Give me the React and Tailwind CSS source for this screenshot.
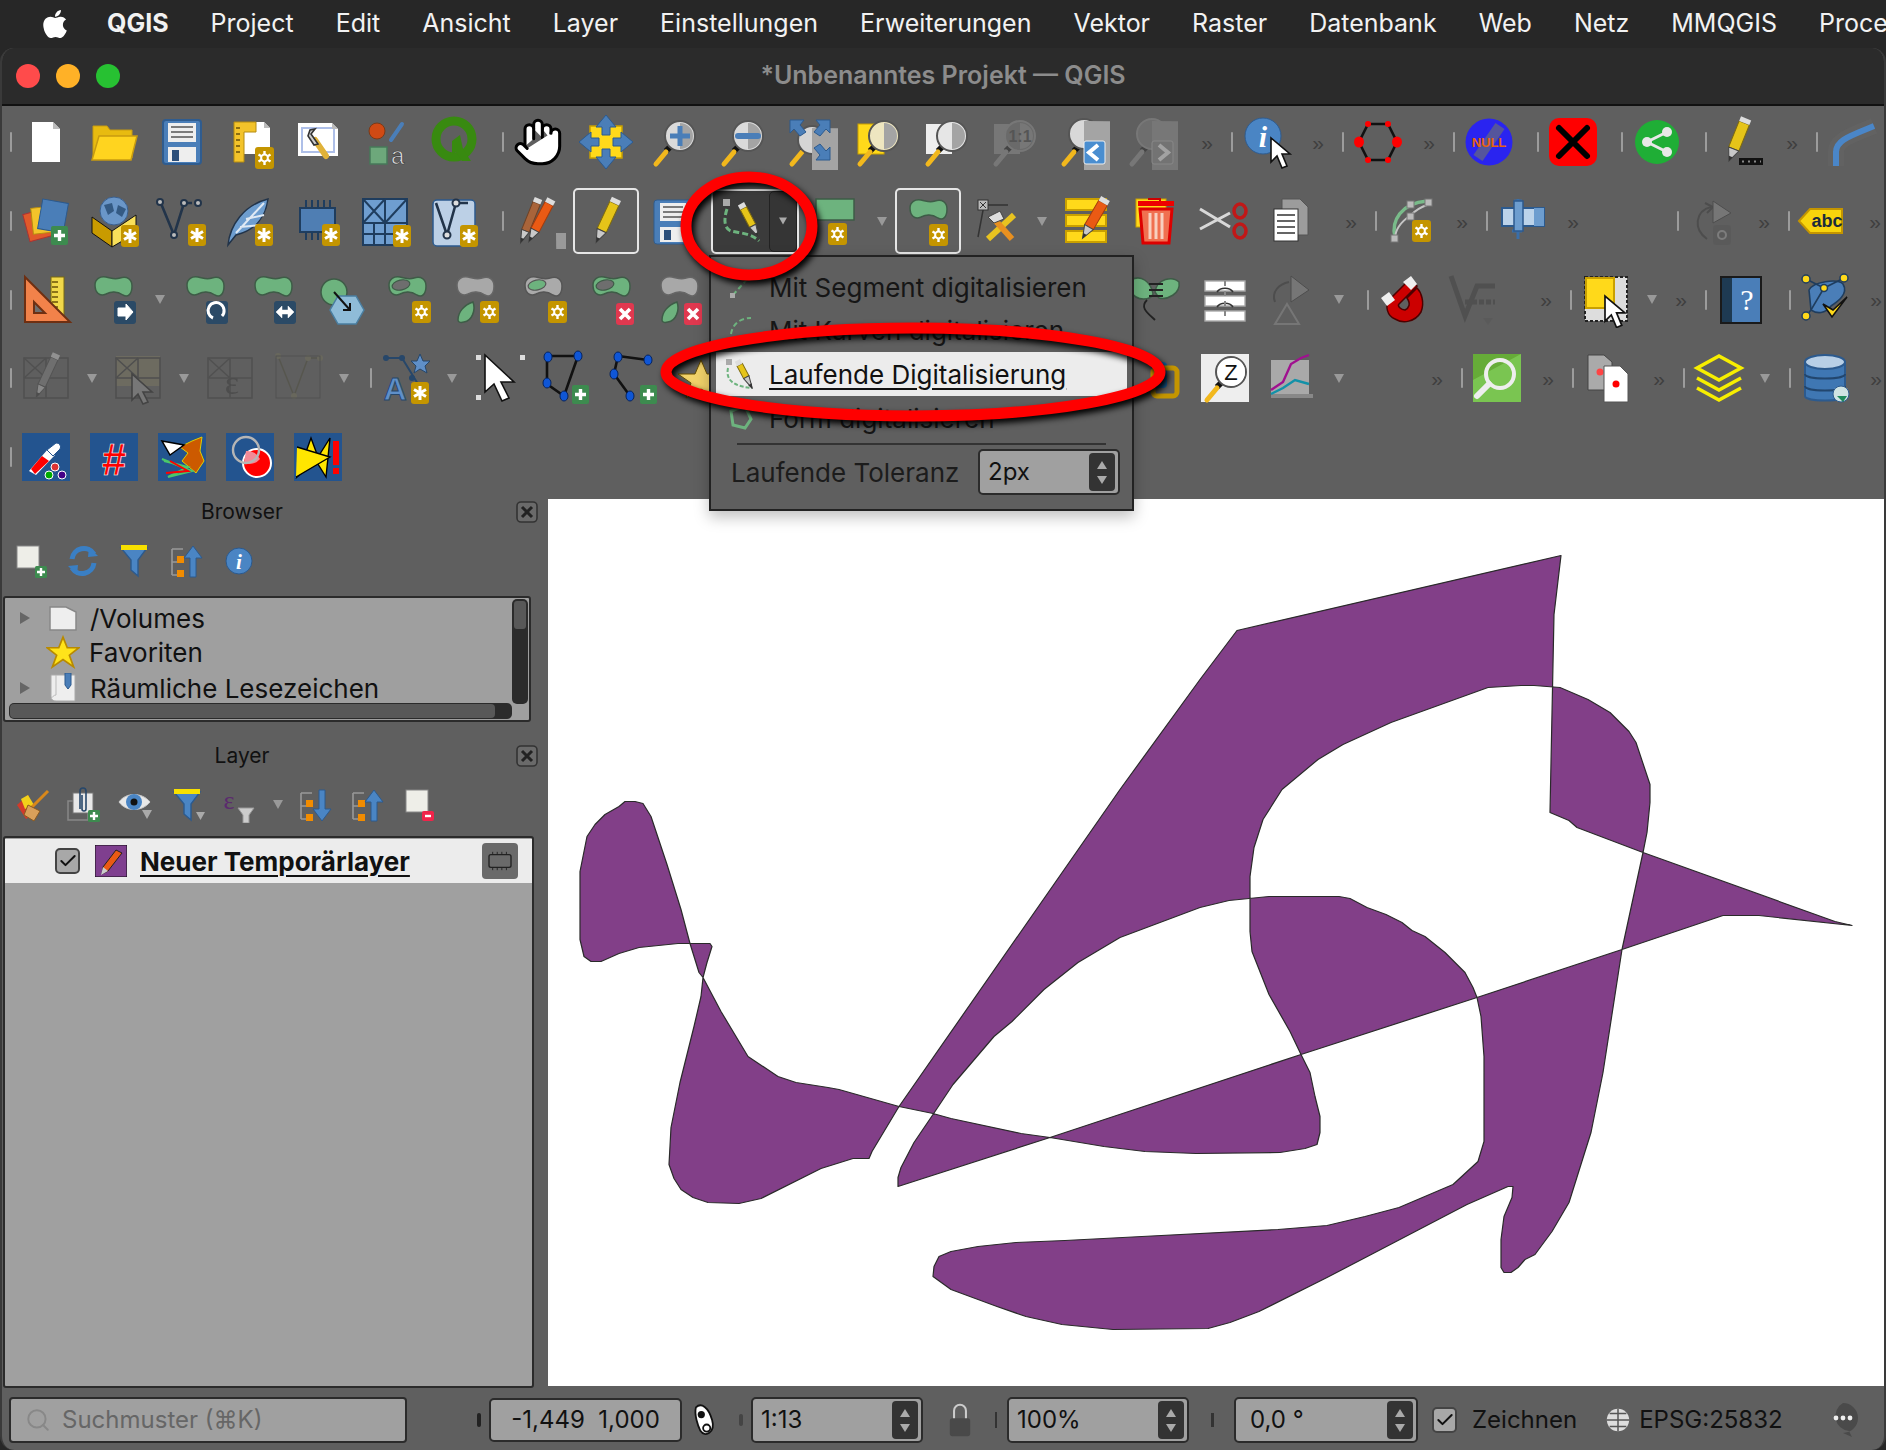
import React from 'react';
import { FaApple } from 'react-icons/fa';
import { Hand, Search, Check } from 'lucide-react';

const menus = ['Project', 'Edit', 'Ansicht', 'Layer', 'Einstellungen', 'Erweiterungen', 'Vektor', 'Raster', 'Datenbank', 'Web', 'Netz', 'MMQGIS', 'Processing'];

// canvas polygon, self-crossing, page coordinates
const shape = 'M1852 926L1759 916L1723 916L1622 950L1477 998L1301 1055L1050 1138L898 1187L898 1178L901 1168L914 1143L933 1115L953 1085L994 1037L1012 1022L1044 990L1078 963L1120 938L1200 908L1229 901L1269 897L1339 897L1350 899L1367 908L1386 915L1402 923L1412 931L1425 937L1445 953L1465 973L1473 988L1477 998L1481 1017L1484 1057L1484 1142L1478 1162L1453 1185L1399 1208L1365 1217L1327 1226L1278 1230L1142 1237L1065 1241L1016 1243L978 1247L951 1252L939 1257L934 1267L933 1277L951 1290L997 1307L1026 1317L1062 1325L1113 1330L1208 1329L1230 1323L1259 1312L1327 1278L1375 1253L1467 1205L1508 1187L1513 1187L1512 1198L1504 1217L1501 1240L1501 1268L1504 1273L1511 1273L1518 1268L1525 1260L1535 1255L1552 1232L1569 1203L1591 1133L1603 1073L1622 950L1643 853L1647 833L1650 803L1650 785L1636 743L1629 732L1610 713L1588 700L1560 688L1534 686L1521 686L1488 688L1391 723L1343 745L1318 760L1282 790L1263 820L1254 848L1250 877L1250 932L1252 952L1269 995L1290 1032L1301 1055L1310 1073L1315 1097L1320 1117L1320 1133L1317 1145L1305 1149L1280 1153L1196 1154L1145 1152L1104 1147L1050 1138L1021 1134L951 1119L933 1114L899 1107L839 1090L828 1088L796 1083L778 1077L748 1057L721 1012L703 978L699 973L690 944L681 910L667 865L651 817L643 804L635 802L625 802L619 807L605 815L595 825L587 837L580 872L580 940L584 957L591 962L601 962L619 954L639 948L678 944L710 944L712 947L707 963L703 978L701 997L694 1027L680 1083L671 1128L669 1165L674 1179L681 1190L693 1198L708 1203L739 1204L761 1199L821 1169L853 1159L869 1159L872 1152L899 1107L1120 790L1200 680L1237 631L1561 556L1554 615L1550 813L1569 821L1577 828L1643 853L1835 922Z';

const blobD = 'M1 9C1 3 6 0 12 1C18 2 20 4 26 2C33 0 38 3 38 10C38 18 34 22 29 19C23 15 18 15 12 18C5 21 1 16 1 9Z';

const Ic = ({ children, dim }) => (
  <svg viewBox="0 0 56 56" className={dim ? 'w-[56px] h-[56px] opacity-40' : 'w-[56px] h-[56px]'}>{children}</svg>
);

const Gear = ({ x = 33, y = 32 }) => (
  <g transform={`translate(${x} ${y})`}>
    <rect width="19" height="22" rx="3" fill="#c49500" />
    <path d="M9.5 4V18M3.5 7.5L15.5 14.5M15.5 7.5L3.5 14.5" stroke="#fff" strokeWidth="2.4" />
    <circle cx="9.5" cy="11" r="3.4" fill="#c49500" stroke="#fff" strokeWidth="2" />
  </g>
);
const Ast = ({ x = 34, y = 32 }) => (
  <g transform={`translate(${x} ${y})`}>
    <rect width="18" height="22" rx="3" fill="#c49500" />
    <path d="M9 4V18M3 7.5L15 14.5M15 7.5L3 14.5" stroke="#fff" strokeWidth="3" />
  </g>
);
const Plus = ({ x = 33, y = 34 }) => (
  <g transform={`translate(${x} ${y})`}>
    <rect width="17" height="19" rx="2" fill="#3d8b4f" />
    <path d="M8.5 4V15M3 9.5H14" stroke="#fff" strokeWidth="3.4" />
  </g>
);
const Rem = ({ x = 34, y = 32 }) => (
  <g transform={`translate(${x} ${y})`}>
    <rect width="18" height="22" rx="3" fill="#e0384f" />
    <path d="M4 6L14 16M14 6L4 16" stroke="#fff" strokeWidth="3.6" />
  </g>
);
const Blob = ({ x = 8, y = 8, fill = '#6db37e', stroke = '#3e5c47', ring }) => (
  <g transform={`translate(${x} ${y})`}>
    <path d={blobD} fill={fill} stroke={stroke} strokeWidth="1.5" />
    {ring && <ellipse cx="13" cy="9" rx="9" ry="5" fill={ring} stroke={stroke} strokeWidth="1.2" transform="rotate(-12 13 9)" />}
  </g>
);
const Leaf = ({ x = 10, y = 34 }) => (
  <path transform={`translate(${x} ${y})`} d="M0 18C0 10 6 3 15 0C18 8 14 19 6 20C2 21 0 20 0 18Z" fill="#6db37e" stroke="#3e5c47" strokeWidth="1.5" />
);
const Lens = ({ cx = 34, cy = 22, r = 15, fill = '#d2d2d2', children, dim }) => (
  <g>
    <path d="M24 33L20 37" stroke={dim ? '#444' : '#111'} strokeWidth="6" />
    <path d="M20 38L10 50" stroke={dim ? '#777' : '#f2b81d'} strokeWidth="5" strokeLinecap="round" />
    <circle cx={cx} cy={cy} r={r} fill={fill} stroke={dim ? '#777' : '#555'} strokeWidth="2" />
    <path d={`M${cx} ${cy - r + 2}A${r - 2} ${r - 2} 0 0 1 ${cx} ${cy + r - 2}Z`} fill={dim ? '#777' : '#a4a4a4'} />
    {children}
  </g>
);
const Cur = ({ x, y, k = 1 }) => (
  <path transform={`translate(${x} ${y}) scale(${k})`} d="M0 0L0 24L6 18L11 30L16 28L11 16L19 16Z" fill="#fff" stroke="#111" strokeWidth="1.6" />
);
const Pen = ({ x, y, body = '#e6c419', edge = '#7d6a10', len = 32, w = 9, a = 28, dim }) => (
  <g transform={`translate(${x} ${y}) rotate(${a})`} opacity={dim ? 0.6 : 1}>
    <rect x={-w / 2} y={-len / 2} width={w} height={len} fill={body} stroke={edge} strokeWidth="1" />
    <rect x={-w / 2} y={-len / 2 - 5} width={w} height="5" fill="#ddd" />
    <path d={`M${-w / 2} ${len / 2}L${w / 2} ${len / 2}L0 ${len / 2 + 13}Z`} fill="#c9c9c9" stroke="#444" strokeWidth="1" />
    <path d={`M-2 ${len / 2 + 8}L2 ${len / 2 + 8}L0 ${len / 2 + 13}Z`} fill="#333" />
  </g>
);
const Tri = ({ x, y }) => <path d={`M${x - 5} ${y - 4}H${x + 5}L${x} ${y + 5}Z`} fill="#999" />;
const Arrow4 = ({ fill = '#4a7eb8', stroke = '#2c5a8e' }) => (
  <g fill={fill} stroke={stroke} strokeWidth="1">
    {[0, 90, 180, 270].map((r) => (
      <path key={r} transform={`rotate(${r} 28 28)`} d="M28 1L38 13H32V21H24V13H18Z" />
    ))}
  </g>
);
const MeshBox = () => (
  <g fill="none" stroke="#3c3c3c" strokeWidth="1.6">
    <rect x="6" y="8" width="44" height="40" />
    <path d="M6 8L28 28M28 8L6 28M28 8V48M6 28H50" />
  </g>
);
const Nodes = ({ pts, r = 4 }) => pts.map(([x, y], i) => <ellipse key={i} cx={x} cy={y} rx={r} ry={r + 1} fill="#0f56d6" stroke="#06225c" />);

const Page = () => <Ic><path d="M14 8H35L42 15V48H14Z" fill="#fff" /><path d="M35 8V15H42Z" fill="#bcbcbc" /></Ic>;
const Folder = () => <Ic><path d="M7 12H21L24 16H46V44H7Z" fill="#e8bb10" stroke="#c79b10" /><path d="M13 22H51L45 46H6Z" fill="#ffd41f" stroke="#c79b10" strokeWidth="1.5" /></Ic>;
const Floppy = () => (
  <Ic>
    <rect x="9" y="6" width="38" height="44" rx="3" fill="#4a7eb8" stroke="#2f5c8f" strokeWidth="2" />
    <rect x="14" y="9" width="28" height="19" fill="#eee" />
    <path d="M17 13H39M17 18H39M17 23H39" stroke="#555" strokeWidth="1.6" />
    <rect x="14" y="33" width="28" height="15" fill="#eee" />
    <rect x="18" y="36" width="7" height="11" fill="#2c4f7a" />
  </Ic>
);
const Layouts = () => (
  <Ic>
    <path d="M18 8H42L48 14V40H18Z" fill="#fff" /><path d="M42 8V14H48Z" fill="#bbb" />
    <path d="M12 8H34V18H22V48H12Z" fill="#f3c32a" stroke="#b58c10" />
    <path d="M14 14H18M14 20H18M14 26H18M14 32H18M14 38H18" stroke="#6b5208" strokeWidth="1.5" />
    <Gear x="33" y="33" />
  </Ic>
);
const Manager = () => (
  <Ic>
    <path d="M8 9H42L48 15V42H8Z" fill="#fff" /><rect x="12" y="14" width="32" height="24" fill="none" stroke="#aebfe8" strokeWidth="2" />
    <path d="M42 9V15H48Z" fill="#bbb" />
    <path d="M36 42L25 26" stroke="#e0b23a" strokeWidth="6" strokeLinecap="round" />
    <path d="M28 30L21 20L25 15L20 16L18 22L24 31Z" fill="#ccc" stroke="#333" strokeWidth="1.6" />
  </Ic>
);
const Style = () => (
  <Ic>
    <circle cx="19" cy="17" r="8" fill="#d04a14" stroke="#7a3a18" />
    <path d="M33 26L44 10" stroke="#4a7eb8" strokeWidth="4" strokeLinecap="round" />
    <rect x="12" y="33" width="17" height="17" fill="#6da87b" stroke="#47795a" strokeWidth="1.5" />
    <text x="33" y="50" fontSize="24" fontFamily="Liberation Sans, sans-serif" fill="#ddd" stroke="#333" strokeWidth="0.6">a</text>
  </Ic>
);
const QLogo = () => (
  <Ic>
    <circle cx="28" cy="25" r="18" fill="none" stroke="#388a10" strokeWidth="9" />
    <path d="M26 27L34 21L37 35L45 47H36L30 38L26 41Z" fill="#388a10" />
  </Ic>
);
const MoveIcon = () => <Ic><rect x="12" y="12" width="32" height="32" fill="#ffd91a" stroke="#c9a000" strokeWidth="1.5" /><Arrow4 /></Ic>;
const ZoomIn = () => <Ic><Lens fill="#dadada"><path d="M24 22H44M34 12V32" stroke="#4a7eb8" strokeWidth="5" /></Lens></Ic>;
const ZoomOut = () => <Ic><Lens fill="#dadada"><path d="M24 22H44" stroke="#4a7eb8" strokeWidth="6" strokeLinecap="round" /></Lens></Ic>;
const ZoomFull = () => (
  <Ic>
    <Lens fill="#d5d5d5" cx="30" cy="26" r="14" />
    <g fill="#4a7eb8" stroke="#2c5a8e">
      <path d="M8 6H22L18 11L24 18L18 22L12 15L8 19Z" /><path d="M48 6H34L38 11L32 18L38 22L44 15L48 19Z" /><path d="M48 46H34L38 41L32 34L38 30L44 37L48 33Z" />
    </g>
  </Ic>
);
const ZoomSel = () => <Ic><rect x="8" y="10" width="26" height="30" fill="#ffd91a" stroke="#c9a000" /><Lens fill="#eee6c0" /></Ic>;
const ZoomLayer = () => <Ic><rect x="8" y="10" width="26" height="30" fill="#eee" /><Lens fill="#e6e6e6" /></Ic>;
const Zoom11 = () => (
  <Ic>
    <rect x="8" y="10" width="26" height="30" fill="#777" />
    <Lens fill="#6a6a6a" dim><text x="34" y="28" textAnchor="middle" fontSize="16" fontWeight="700" fontFamily="Liberation Sans, sans-serif" fill="#555">1:1</text></Lens>
  </Ic>
);
const ZoomLast = () => (
  <Ic>
    <Lens fill="#d8d8d8" cx="30" cy="20" />
    <rect x="30" y="27" width="21" height="23" rx="2" fill="#4a8ed0" stroke="#eee" />
    <path d="M44 31L35 38.5L44 46" fill="none" stroke="#fff" strokeWidth="4" />
  </Ic>
);
const ZoomNext = () => (
  <Ic>
    <Lens fill="#6e6e6e" cx="30" cy="20" dim />
    <rect x="30" y="27" width="21" height="23" rx="2" fill="#737373" stroke="#888" />
    <path d="M37 31L46 38.5L37 46" fill="none" stroke="#a2a2a2" strokeWidth="4" />
  </Ic>
);
const Identify = () => (
  <Ic>
    <circle cx="24" cy="22" r="18" fill="#4a85c4" stroke="#2f5c8f" />
    <text x="24" y="33" textAnchor="middle" fontSize="30" fontWeight="700" fontStyle="italic" fontFamily="Liberation Serif, serif" fill="#fff">i</text>
    <Cur x="32" y="24" />
  </Ic>
);
const Hexa = () => (
  <Ic>
    <path d="M18 10H38L47 28L38 46H18L9 28Z" fill="none" stroke="#111" strokeWidth="2.6" />
    {[[18, 10], [38, 10], [38, 46], [18, 46]].map(([x, y]) => <circle key={x + '' + y} cx={x} cy={y} r="3" fill="#f00" />)}
    <ellipse cx="9" cy="28" rx="5" ry="5.5" fill="#f00" /><ellipse cx="47" cy="28" rx="5" ry="5.5" fill="#f00" />
  </Ic>
);
const NullIcon = () => (
  <Ic>
    <circle cx="28" cy="28" r="23.5" fill="#2a24f0" />
    <path d="M39 12L17 44" stroke="#55559c" strokeWidth="11" />
    <text x="28" y="33" textAnchor="middle" fontSize="13" fontWeight="700" fontFamily="Liberation Sans, sans-serif" fill="#e8620e">NULL</text>
  </Ic>
);
const RedX = () => <Ic><rect x="4" y="4" width="48" height="48" rx="10" fill="#f00" /><path d="M14 14L42 42M42 14L14 42" stroke="#000" strokeWidth="6" strokeLinecap="round" /></Ic>;
const ShareIcon = () => (
  <Ic>
    <circle cx="28" cy="28" r="22" fill="#1fae36" />
    <path d="M38 18L18 28L38 38" fill="none" stroke="#e8e8e8" strokeWidth="3" />
    <circle cx="38" cy="18" r="5" fill="#e8e8e8" /><circle cx="18" cy="28" r="5" fill="#e8e8e8" /><circle cx="38" cy="38" r="5" fill="#e8e8e8" />
  </Ic>
);
const PenDots = () => (
  <Ic>
    <Pen x="26" y="22" len="28" w="11" a="22" />
    <rect x="26" y="44" width="24" height="7" fill="#111" />
    <path d="M29 47.5H48" stroke="#888" strokeWidth="2" strokeDasharray="2 4" />
  </Ic>
);
const Pipe = () => (
  <Ic>
    <path d="M12 52V38C12 26 26 22 50 12" fill="none" stroke="#666" strokeWidth="16" opacity="0.5" />
    <path d="M12 52V38C12 26 26 22 50 12" fill="none" stroke="#4a86c8" strokeWidth="6" />
  </Ic>
);

const AddLayer = () => (
  <Ic>
    <rect x="8" y="18" width="24" height="28" fill="#e0592a" stroke="#a33" transform="rotate(-15 20 32)" />
    <rect x="14" y="14" width="24" height="26" fill="#f3c32a" stroke="#b58c10" transform="rotate(-6 26 27)" />
    <rect x="22" y="8" width="26" height="30" fill="#4a7eb8" stroke="#2c5a8e" transform="rotate(10 35 23)" />
    <Plus x="33" y="33" />
  </Ic>
);
const GeoBox = () => (
  <Ic>
    <circle cx="28" cy="18" r="14" fill="#6a96c8" stroke="#3a5f8e" /><path d="M18 12L26 10L28 18L22 22ZM32 12L40 16L36 24L30 20Z" fill="#345a84" />
    <path d="M6 24L26 38V54L6 40Z" fill="#c99b00" stroke="#111" /><path d="M26 38L50 22V40L26 54Z" fill="#f8e05a" stroke="#111" />
    <Ast x="35" y="32" />
  </Ic>
);
const VIcon = () => (
  <Ic>
    <path d="M6 8L20 42L30 10L38 10" fill="none" stroke="#22344a" strokeWidth="2.6" />
    <g fill="#bbb" stroke="#22344a" strokeWidth="2"><circle cx="6" cy="9" r="3" /><circle cx="20" cy="42" r="3" /><circle cx="30" cy="10" r="3" /><circle cx="44" cy="10" r="3" /></g>
    <Ast x="34" y="31" />
  </Ic>
);
const Feather = () => (
  <Ic>
    <path d="M6 52C8 32 22 12 46 6C44 20 38 36 14 42Z" fill="#6d9dcf" stroke="#22344a" strokeWidth="1.5" />
    <path d="M14 40L42 10M18 34L38 32M24 26L42 22" stroke="#dfe9f4" strokeWidth="2" />
    <Ast x="33" y="31" />
  </Ic>
);
const Chip = () => (
  <Ic>
    <rect x="10" y="15" width="35" height="24" fill="#4f7eb3" stroke="#1f3d5e" strokeWidth="2" />
    <path d="M16 7V15M22 7V15M28 7V15M34 7V15M40 7V15M16 39V47M22 39V47M28 39V47" stroke="#1f3d5e" strokeWidth="2" />
    <Ast x="32" y="31" />
  </Ic>
);
const MeshIcon = () => (
  <Ic>
    <rect x="5" y="6" width="44" height="46" fill="#6f9ed0" stroke="#1f3d5e" strokeWidth="2" />
    <path d="M5 30H49M27 6V52M5 6L27 30M27 6L5 30M27 30L49 6M5 41H49M16 30V52" stroke="#1f3d5e" strokeWidth="2" fill="none" />
    <Ast x="35" y="32" />
  </Ic>
);
const VTile = () => (
  <Ic>
    <rect x="7" y="7" width="42" height="46" rx="4" fill="#bcd0e6" stroke="#2c5a8e" strokeWidth="1.5" />
    <path d="M10 10L21 42L30 10L42 10" fill="none" stroke="#22344a" strokeWidth="2.6" />
    <g fill="#ddd" stroke="#22344a" strokeWidth="2"><circle cx="21" cy="42" r="3.5" /><circle cx="30" cy="10" r="3.5" /></g>
    <Ast x="34" y="32" />
  </Ic>
);
const Pencils = () => (
  <Ic>
    <Pen x="21" y="24" body="#a9643a" edge="#6d4226" len="30" w="8" a="22" />
    <Pen x="32" y="24" body="#ea5a14" edge="#a33c0d" len="30" w="9" a="28" />
    <Tri x="51" y="44" />
  </Ic>
);
const EditPen = () => <Ic><Pen x="30" y="24" len="30" w="10" a="25" /></Ic>;
const SaveEdits = () => (
  <Ic>
    <rect x="8" y="7" width="38" height="44" rx="3" fill="#4a7eb8" stroke="#2f5c8f" />
    <rect x="14" y="10" width="26" height="18" fill="#eee" /><path d="M17 14H37M17 19H37M17 24H37" stroke="#555" strokeWidth="1.6" />
    <rect x="14" y="34" width="26" height="15" fill="#eee" /><rect x="18" y="37" width="7" height="10" fill="#2c4f7a" />
  </Ic>
);
const AddRect = () => (
  <Ic>
    <rect x="8" y="6" width="38" height="21" fill="#6db37e" stroke="#3e5c47" strokeWidth="1.5" />
    <Gear x="20" y="30" />
  </Ic>
);
const BlobGear = () => <Ic><Blob x="9" y="6" /><Gear x="29" y="31" /></Ic>;
const VertexTool = () => (
  <Ic>
    <path d="M10 44L16 12H40" fill="none" stroke="#333" strokeWidth="1.5" />
    <rect x="10" y="7" width="10" height="10" fill="#bbb" stroke="#333" /><path d="M12 9L18 15M18 9L12 15" stroke="#333" />
    <path d="M20 46L46 22" stroke="#e8c320" strokeWidth="6" />
    <path d="M26 26L44 46" stroke="#e89020" strokeWidth="6" />
    <path d="M20 24L32 18L36 26L26 30Z" fill="#ddd" stroke="#444" />
  </Ic>
);
const MultiEdit = () => (
  <Ic>
    <g fill="#ffd91a" stroke="#c9a000" strokeWidth="2"><rect x="6" y="6" width="40" height="11" /><rect x="6" y="22" width="40" height="11" /><rect x="6" y="38" width="40" height="11" /></g>
    <Pen x="36" y="22" body="#ea5a14" edge="#a33c0d" len="28" w="10" a="30" />
  </Ic>
);
const Trash = () => (
  <Ic>
    <rect x="8" y="6" width="30" height="28" fill="#ffd91a" stroke="#c9a000" />
    <path d="M20 6H32V10" fill="none" stroke="#c00" strokeWidth="2" />
    <rect x="10" y="8" width="36" height="5" fill="#e00" />
    <path d="M12 16H44L41 50H15Z" fill="#f07050" stroke="#d00" strokeWidth="3" />
    <path d="M22 20V46M28 20V46M34 20V46" stroke="#f8d0c0" strokeWidth="3" />
  </Ic>
);
const Scissors = () => (
  <Ic>
    <path d="M4 16L34 34M4 36L34 20" stroke="#d8d8d8" strokeWidth="3" />
    <g fill="none" stroke="#c01818" strokeWidth="3.5"><ellipse cx="44" cy="18" rx="6" ry="7" /><ellipse cx="44" cy="38" rx="6" ry="7" /></g>
  </Ic>
);
const Copy = () => (
  <Ic>
    <path d="M18 6H36L44 14V42H18Z" fill="#9c9c9c" stroke="#555" />
    <rect x="10" y="16" width="24" height="32" fill="#fff" stroke="#333" />
    <path d="M13 22H31M13 28H31M13 34H31M13 40H31" stroke="#333" strokeWidth="1.6" />
  </Ic>
);
const CurveIcon = () => (
  <Ic>
    <path d="M12 44C8 28 18 10 44 8" fill="none" stroke="#79bb8a" strokeWidth="3.5" />
    <path d="M12 46C12 34 22 26 28 22C34 16 38 14 44 12" fill="none" stroke="#c4c4c4" strokeWidth="2" />
    <g fill="#bbb" stroke="#777"><rect x="8" y="42" width="7" height="7" /><rect x="24" y="8" width="7" height="7" /><rect x="24" y="20" width="7" height="7" /><rect x="42" y="6" width="7" height="7" /></g>
    <Gear x="29" y="27" />
  </Ic>
);
const AlignIcon = () => (
  <Ic>
    <rect x="8" y="15" width="42" height="18" fill="#bcd3ea" stroke="#2c5a8e" strokeWidth="2" />
    <rect x="40" y="15" width="10" height="18" fill="#6d9dcf" />
    <path d="M24 6V46M20 8H28M18 38H28" stroke="#3a6ea8" strokeWidth="3" fill="none" />
    <rect x="20" y="8" width="9" height="30" fill="#6d9dcf" stroke="#2c5a8e" strokeWidth="1.5" />
  </Ic>
);
const RedoDim = () => (
  <Ic dim>
    <path d="M22 46C8 36 10 18 26 14" fill="none" stroke="#333" strokeWidth="2" /><path d="M20 10L28 14L22 20" fill="none" stroke="#333" strokeWidth="2" />
    <path d="M28 8L46 20L28 30Z" fill="#999" stroke="#333" />
    <rect x="28" y="32" width="18" height="20" rx="3" fill="#555" /><circle cx="37" cy="42" r="4" fill="none" stroke="#aaa" strokeWidth="2" />
  </Ic>
);
const Abc = () => (
  <Ic>
    <path d="M3 28L14 16H46V40H14Z" fill="#f8d40c" stroke="#c49500" strokeWidth="2" />
    <text x="31" y="34" textAnchor="middle" fontSize="18" fontWeight="700" fontFamily="Liberation Sans, sans-serif" fill="#1b2b3c">abc</text>
  </Ic>
);

const Ruler = () => (
  <Ic>
    <rect x="33" y="5" width="13" height="44" fill="#f1d84a" stroke="#7a6a10" />
    <path d="M34 10H40M34 15H40M34 20H40M34 25H40M34 30H40M34 35H40" stroke="#6b5208" strokeWidth="1.5" />
    <path d="M7 5L52 50H7Z" fill="#f2824a" stroke="#6e2f12" strokeWidth="2" />
    <path d="M16 30L27 41H16Z" fill="#6e6e6e" stroke="#6e2f12" strokeWidth="2" />
  </Ic>
);
const DarkTag = ({ children }) => (
  <g><rect x="28" y="29" width="22" height="23" rx="3" fill="#2b4a66" /><g stroke="#fff" fill="#fff">{children}</g></g>
);
const Merge = () => <Ic><Blob x="8" y="4" /><DarkTag><path d="M32 36H40V32L47 40L40 48V44H32Z" strokeWidth="1" /></DarkTag></Ic>;
const Rotate = () => <Ic><Blob x="8" y="4" /><DarkTag><path d="M35 46A8 8 0 1 1 44 44" fill="none" strokeWidth="3" /></DarkTag></Ic>;
const Swap = () => <Ic><Blob x="8" y="4" /><DarkTag><path d="M30 40L36 34V38H42V34L48 40L42 46V42H36V46Z" strokeWidth="0.5" /></DarkTag></Ic>;
const Circ = () => (
  <Ic>
    <circle cx="20" cy="20" r="13" fill="#6db37e" stroke="#3e5c47" strokeWidth="1.5" />
    <path d="M24 24H42L50 38L42 52H24L16 38Z" fill="#8fbcd8" stroke="#4a7ea0" strokeWidth="1.5" />
    <path d="M20 20L36 38" stroke="#111" strokeWidth="2" /><path d="M36 31V38H29" fill="none" stroke="#111" strokeWidth="2" />
  </Ic>
);
const RingGear = () => <Ic><Blob x="6" y="4" ring="#6e6e6e" /><Gear x="30" y="29" /></Ic>;
const GrayLeaf = ({ bad }) => (
  <Ic>
    <Blob x="6" y="4" fill="#a8a8a8" stroke="#666" />
    <Leaf x="8" y="30" />
    {bad ? <Rem x="30" y="31" /> : <Gear x="30" y="29" />}
  </Ic>
);
const GrayRing = () => <Ic><Blob x="6" y="4" fill="#aaa" stroke="#555" ring="#6db37e" /><Gear x="30" y="29" /></Ic>;
const RingRem = () => <Ic><Blob x="6" y="4" ring="#6e6e6e" /><Rem x="30" y="31" /></Ic>;
const Bridge = () => (
  <Ic>
    <path d="M2 8C12 2 22 10 24 22C22 28 8 30 2 20Z" fill="#6db37e" stroke="#3e5c47" strokeWidth="1.5" />
    <path d="M26 20C28 6 44 4 50 10C52 22 38 28 30 26Z" fill="#6db37e" stroke="#3e5c47" strokeWidth="1.5" />
    <path d="M20 12H34M20 18H34M20 24H34M18 28C10 36 20 42 26 48" fill="none" stroke="#222" strokeWidth="1.8" />
  </Ic>
);
const Spread = () => (
  <Ic>
    <g fill="#fff" stroke="#aaa" strokeWidth="1.4"><rect x="8" y="9" width="40" height="10" /><rect x="8" y="24" width="40" height="10" /><rect x="8" y="39" width="40" height="10" /></g>
    <path d="M20 20A9 7 0 0 1 36 20M20 35A9 7 0 0 1 36 35" fill="none" stroke="#333" strokeWidth="1.6" />
    <path d="M28 9V49" stroke="#888" strokeWidth="2" strokeDasharray="5 5" />
  </Ic>
);
const OffsetDim = () => (
  <Ic dim>
    <path d="M10 30C6 20 14 12 24 10" fill="none" stroke="#333" strokeWidth="2" />
    <path d="M26 4L44 18L26 30Z" fill="#999" stroke="#333" />
    <path d="M22 32L34 52H10Z" fill="none" stroke="#999" strokeWidth="2" />
  </Ic>
);
const Magnet = () => (
  <Ic>
    <path d="M34 8L14 28C10 34 12 44 20 47C28 52 40 50 46 40C50 30 46 20 42 16L32 26C36 32 34 36 30 38C26 38 22 34 24 32L42 14Z" fill="#cc0000" stroke="#4d0000" strokeWidth="1.5" />
    <path d="M28 10L36 4L42 12L36 18ZM6 26L14 20L20 28L12 34Z" fill="#eee" />
  </Ic>
);
const SnapDim = () => (
  <Ic dim>
    <path d="M8 4L22 44L34 14H52" fill="none" stroke="#3a3a3a" strokeWidth="5" />
    <path d="M22 30H52" stroke="#3a3a3a" strokeWidth="5" strokeDasharray="5 2" />
    <path d="M40 46H50L45 53Z" fill="#555" />
  </Ic>
);
const Select = () => (
  <Ic>
    <rect x="7" y="5" width="42" height="44" fill="#ddd" stroke="#222" strokeDasharray="3 2" strokeWidth="2" />
    <rect x="8" y="6" width="28" height="30" fill="#ffd91a" stroke="#c9a000" strokeWidth="2" />
    <Cur x="27" y="24" k="1.05" />
  </Ic>
);
const Help = () => (
  <Ic>
    <rect x="8" y="5" width="40" height="46" fill="#4a7eb8" stroke="#1a1a1a" strokeWidth="2" />
    <rect x="9" y="6" width="10" height="44" fill="#1e3a52" />
    <text x="34" y="38" textAnchor="middle" fontSize="30" fontFamily="Liberation Serif, serif" fill="#fff">?</text>
  </Ic>
);
const NodeCheck = () => (
  <Ic>
    <path d="M12 18C16 10 40 6 46 12C52 22 40 30 34 34C28 42 20 42 14 38Z" fill="#4a7eb8" stroke="#1f3d5e" strokeWidth="1.6" />
    <path d="M9 7L27 16L47 6M27 16L14 38L9 44" fill="none" stroke="#1f3d5e" strokeWidth="1.6" />
    <g fill="#ffd91a" stroke="#1f3d5e" strokeWidth="1.5"><circle cx="9" cy="7" r="4" /><circle cx="27" cy="16" r="3.5" /><circle cx="47" cy="6" r="4" /><circle cx="9" cy="44" r="4" /></g>
    <path d="M26 32L35 45L50 25L36 38Z" fill="#ffd91a" stroke="#111" strokeWidth="1.6" />
  </Ic>
);

const PenMesh = () => <Ic dim><MeshBox /><Pen x="30" y="22" body="#888" edge="#444" len="30" w="8" a="25" /></Ic>;
const MeshCur = () => (
  <Ic>
    <g opacity="0.45"><rect x="6" y="6" width="44" height="30" fill="#7f7a62" /><MeshBox /></g>
    <path d="M22 24L22 50L28 44L33 54L38 52L33 42L42 42Z" fill="#777" stroke="#444" strokeWidth="1.6" />
  </Ic>
);
const MeshE = () => (
  <Ic dim>
    <MeshBox />
    <text x="30" y="44" textAnchor="middle" fontSize="34" fontFamily="Liberation Serif, serif" fill="#333">ε</text>
  </Ic>
);
const VDim = () => (
  <Ic dim>
    <path d="M8 6L24 46L38 8H50" fill="none" stroke="#4b4a36" strokeWidth="1.5" />
    <g fill="#77755a"><circle cx="8" cy="6" r="3" /><circle cx="24" cy="46" r="3" /><circle cx="38" cy="8" r="3" /><circle cx="50" cy="8" r="3" /></g>
    <rect x="6" y="6" width="44" height="42" fill="none" stroke="#3c3c3c" />
  </Ic>
);
const LabelIc = () => (
  <Ic>
    <path d="M8 8H24L40 34" fill="none" stroke="#27476a" strokeWidth="2" />
    <circle cx="8" cy="8" r="3" fill="#27476a" /><circle cx="24" cy="8" r="3" fill="#27476a" /><circle cx="34" cy="28" r="3" fill="#27476a" />
    <path d="M42 4L45 11H52L47 16L49 23L42 19L36 23L38 16L33 11H39Z" fill="#5f8fc8" stroke="#27476a" />
    <text x="17" y="50" textAnchor="middle" fontSize="32" fontWeight="700" fontFamily="Liberation Sans, sans-serif" fill="#5f8fc8" stroke="#27476a" strokeWidth="1">A</text>
    <Ast x="33" y="32" />
  </Ic>
);
const SelectArrow = () => (
  <Ic>
    <g fill="#ddd"><rect x="6" y="5" width="5" height="5" /><rect x="50" y="5" width="5" height="5" /><rect x="6" y="45" width="5" height="5" /></g>
    <path d="M15 5V42L24 34L32 51L39 48L31 32L44 32Z" fill="#fff" stroke="#111" strokeWidth="1.6" />
  </Ic>
);
const Poly = () => (
  <Ic>
    <path d="M9 6L40 6L26 46L9 34Z" fill="none" stroke="#111" strokeWidth="2.6" />
    <Nodes pts={[[10, 7], [40, 6], [9, 33], [26, 46]]} />
    <Plus x="34" y="35" />
  </Ic>
);
const LineAdd = () => (
  <Ic>
    <path d="M12 6L42 10M12 6L8 24L24 46" fill="none" stroke="#111" strokeWidth="2.6" />
    <Nodes pts={[[12, 7], [42, 10], [8, 24], [24, 46]]} />
    <Plus x="34" y="35" />
  </Ic>
);
const StarIc = () => <Ic><path d="M27 10L33 24L50 24L37 33L42 48L27 39L12 48L17 33L4 24L21 24Z" fill="#f2d36a" stroke="#6a5000" /></Ic>;
const BlueYellow = () => <Ic><rect x="22" y="12" width="16" height="26" rx="4" fill="#14619e" /><rect x="24" y="18" width="24" height="28" rx="4" fill="none" stroke="#c49500" strokeWidth="5" /></Ic>;
const ZoomZ = () => (
  <Ic>
    <rect x="4" y="4" width="48" height="48" fill="#eee" />
    <Lens fill="#fff"><path d="M34 8A14 14 0 0 1 34 36Z" fill="#fff" /><text x="34" y="30" textAnchor="middle" fontSize="22" fontFamily="Liberation Sans, sans-serif" fill="#111">Z</text></Lens>
  </Ic>
);
const Chart = () => (
  <Ic>
    <rect x="6" y="10" width="38" height="34" fill="#a9a9a9" />
    <path d="M6 46H48" stroke="#888" strokeWidth="4" />
    <path d="M6 40L18 32L26 14L36 8L44 5" fill="none" stroke="#a0108f" strokeWidth="2.4" />
    <path d="M6 44L18 38L30 30L44 34" fill="none" stroke="#1291a8" strokeWidth="2.4" />
  </Ic>
);
const GreenSearch = () => (
  <Ic>
    <rect x="4" y="4" width="48" height="48" fill="#66ac38" />
    <path d="M4 52V30L52 4V52Z" fill="#80cc58" opacity="0.8" />
    <circle cx="31" cy="24" r="14" fill="none" stroke="#eee" strokeWidth="4" />
    <path d="M20 34L8 46" stroke="#eee" strokeWidth="6" strokeLinecap="round" />
  </Ic>
);
const Pages = () => (
  <Ic>
    <path d="M8 5H24L32 12V40H8Z" fill="#aaa" stroke="#444" /><circle cx="20" cy="22" r="3.5" fill="#f44" />
    <path d="M24 16H40L48 24V52H24Z" fill="#fff" stroke="#555" /><circle cx="36" cy="34" r="3.5" fill="#f00" />
  </Ic>
);
const Layers = () => (
  <Ic>
    <g fill="none" stroke="#f7ee00" strokeWidth="3.5"><path d="M28 6L50 18L28 30L6 18Z" /><path d="M6 28L28 40L50 28" /><path d="M6 38L28 50L50 38" /></g>
  </Ic>
);
const Db = () => (
  <Ic>
    <path d="M8 12V46C8 52 48 52 48 46V12Z" fill="#3f77b3" stroke="#2c5a8e" strokeWidth="2" />
    <ellipse cx="28" cy="12" rx="20" ry="7" fill="#b8cfe6" stroke="#2c5a8e" strokeWidth="2" />
    <path d="M8 24C8 30 48 30 48 24M8 36C8 42 48 42 48 36" fill="none" stroke="#22466e" strokeWidth="2" />
    <circle cx="44" cy="44" r="8" fill="#cfe3e3" stroke="#2c5a8e" /><path d="M40 46L50 46L46 52Z" fill="#1f8a5c" />
  </Ic>
);

const Pipette = () => (
  <svg viewBox="0 0 48 48" className="w-[48px] h-[48px]">
    <rect width="48" height="48" fill="#23548f" />
    <path d="M7 38L26 16L33 22L14 42Z" fill="#fff" /><path d="M9 36L20 23L27 28L13 41Z" fill="#f00" />
    <path d="M25 17L34 10A4 4 0 0 1 38 16L31 23Z" fill="#fff" stroke="#23548f" />
    <circle cx="33" cy="34" r="4" fill="#d33" stroke="#fff" /><circle cx="27" cy="42" r="4" fill="#0a0" stroke="#fff" /><circle cx="40" cy="42" r="4" fill="#408" stroke="#fff" />
  </svg>
);
const Hash = () => (
  <svg viewBox="0 0 48 48" className="w-[48px] h-[48px]">
    <rect width="48" height="48" fill="#23548f" />
    <text x="24" y="42" textAnchor="middle" fontSize="44" fontWeight="700" fontFamily="Liberation Sans, sans-serif" fill="#f00" stroke="#fff" strokeWidth="0.6">#</text>
  </svg>
);
const Cross3 = () => (
  <svg viewBox="0 0 48 48" className="w-[48px] h-[48px]">
    <rect width="48" height="48" fill="#23548f" />
    <path d="M22 14L34 8L44 4L42 18L46 28L38 40L24 28L30 20Z" fill="#cc5a00" stroke="#e0d000" />
    <path d="M4 8L26 12L12 22Z" fill="#fff" stroke="#000" strokeWidth="1.5" />
    <path d="M4 26L34 38L10 44L30 34L6 28" fill="none" stroke="#4ac86a" strokeWidth="2" />
    <path d="M8 40L30 38L12 28" fill="none" stroke="#f00" strokeWidth="2" />
  </svg>
);
const Overlap = () => (
  <svg viewBox="0 0 48 48" className="w-[48px] h-[48px]">
    <rect width="48" height="48" fill="#23548f" />
    <circle cx="31" cy="30" r="14" fill="#f00" stroke="#fff" strokeWidth="2" />
    <path d="M20 18A14 14 0 0 1 34 26A14 14 0 0 1 18 30Z" fill="#f28a96" />
    <circle cx="20" cy="17" r="13" fill="none" stroke="#b5b5b5" strokeWidth="2.4" />
  </svg>
);
const StarWarn = () => (
  <svg viewBox="0 0 48 48" className="w-[48px] h-[48px]">
    <rect width="48" height="48" fill="#23548f" />
    <path d="M3 44L17 5L24 24L36 5L32 44L22 28Z" fill="#ffe600" stroke="#000" strokeWidth="1.4" />
    <path d="M3 14L36 24L2 44" fill="#ffe600" stroke="#000" strokeWidth="1.4" />
    <rect x="39" y="8" width="6" height="24" fill="#f00" /><rect x="39" y="35" width="6" height="6" fill="#f00" />
  </svg>
);

const Sep = () => <span className="w-[2px] h-[20px] rounded-full bg-[#9c9c9c] shrink-0" />;
const Gap = () => <span className="w-[14px] shrink-0" />;
const I = ({ children }) => <div className="w-[68px] flex items-center justify-center shrink-0">{children}</div>;
const Boxed = ({ children }) => (
  <div className="w-[68px] flex items-center justify-center shrink-0">
    <div className="w-[66px] h-[66px] flex items-center justify-center rounded-[5px] border-2 border-[#e6e6e6]">{children}</div>
  </div>
);
const More = ({ className = '' }) => (
  <div className={`w-[41px] pr-[7px] text-center text-[21px] leading-none text-[#3e3e3e] shrink-0 font-['Liberation_Sans',sans-serif] ${className}`}>»</div>
);
const Drop = () => (
  <div className="w-[24px] flex justify-center shrink-0">
    <svg viewBox="0 0 10 9" className="w-[10px] h-[9px]"><path d="M0 0H10L5 9Z" fill="#999" /></svg>
  </div>
);
const Row = ({ children, className = 'h-[78.5px]' }) => (
  <div className={`flex items-center pl-[8px] ${className}`}>{children}</div>
);

const Spin = ({ w, text, className = '' }) => (
  <div className={`flex items-center justify-between rounded-[5px] border-2 border-[#2b2b2b] bg-[#a0a0a0] h-[46px] pl-[8px] pr-[3px] ${w} ${className}`}>
    <span className="text-[24px] text-[#111]">{text}</span>
    <div className="w-[26px] h-[38px] rounded-[4px] bg-[#333] flex flex-col items-center justify-around py-[4px]">
      <svg viewBox="0 0 10 8" className="w-[10px] h-[8px]"><path d="M5 0L10 8H0Z" fill="#aaa" /></svg>
      <svg viewBox="0 0 10 8" className="w-[10px] h-[8px]"><path d="M5 8L10 0H0Z" fill="#aaa" /></svg>
    </div>
  </div>
);

const CloseBox = () => (
  <svg viewBox="0 0 22 22" className="w-[22px] h-[22px]">
    <rect x="1" y="1" width="20" height="20" rx="4" fill="#6a6a6a" stroke="#333" strokeWidth="1.6" />
    <path d="M6 6L16 16M16 6L6 16" stroke="#222" strokeWidth="3" />
  </svg>
);
const Sm = ({ children }) => <svg viewBox="0 0 36 36" className="w-[36px] h-[36px]">{children}</svg>;
const SmPlus = () => <g><rect x="22" y="23" width="12" height="12" rx="1.5" fill="#3d8b4f" /><path d="M28 25V33M24 29H32" stroke="#fff" strokeWidth="2.4" /></g>;
const Funnel = () => (
  <g>
    <path d="M4 5H30L21 17V33L14 27V17Z" fill="#4a85c4" stroke="#2c5a8e" strokeWidth="1.4" />
    <rect x="4" y="2" width="26" height="5" fill="#f7e000" />
  </g>
);
const TreeUp = ({ down }) => (
  <g>
    <path d="M3 6V32M3 6H14M3 19H10M3 32H10" stroke="#999" strokeWidth="1.6" fill="none" />
    <rect x="8" y="13" width="7" height="7" fill="#f28c00" /><rect x="8" y="27" width="7" height="7" fill="#f28c00" />
    {down
      ? <path d="M21 3H27V22H33L24 34L15 22H21Z" fill="#4a85c4" stroke="#2c5a8e" />
      : <path d="M21 34H27V15H33L24 3L15 15H21Z" fill="#4a85c4" stroke="#2c5a8e" />}
  </g>
);

const Row3 = () => (
  <Row>
    <Sep /><I><Ruler /></I><I><Merge /></I><Drop /><I><Rotate /></I><I><Swap /></I><I><Circ /></I><I><RingGear /></I><I><GrayLeaf /></I><I><GrayRing /></I><I><RingRem /></I><I><GrayLeaf bad /></I>
    <span className="w-[407px] shrink-0" />
    <I><Bridge /></I><I><Spread /></I><I><OffsetDim /></I><Drop /><span className="w-[16px] shrink-0" />
    <Sep /><I><Magnet /></I><I><SnapDim /></I><span className="w-[24px] shrink-0" /><More />
    <Sep /><I><Select /></I><Drop /><More />
    <Sep /><I><Help /></I><Gap />
    <Sep /><I><NodeCheck /></I><More />
  </Row>
);

const Row4 = () => (
  <Row>
    <Sep /><I><PenMesh /></I><Drop /><I><MeshCur /></I><Drop /><I><MeshE /></I><I><VDim /></I><Drop /><Gap />
    <Sep /><I><LabelIc /></I><Drop /><I><SelectArrow /></I><I><Poly /></I><I><LineAdd /></I><I><StarIc /></I>
    <span className="w-[387px] shrink-0" />
    <I><BlueYellow /></I><I><ZoomZ /></I><I><Chart /></I><Drop /><span className="w-[69px] shrink-0" /><More />
    <Sep /><I><GreenSearch /></I><More />
    <Sep /><I><Pages /></I><More />
    <Sep /><I><Layers /></I><Drop /><span className="w-[12px] shrink-0" />
    <Sep /><I><Db /></I><More />
  </Row>
);

export default function App() {
  return (
    <div className="relative w-[1886px] h-[1450px] overflow-hidden bg-[#272727] font-['Inter','Liberation_Sans',sans-serif]">
      <div className="h-[48px] flex items-center text-[25px] text-[#f2f2f2] whitespace-nowrap">
        <FaApple className="w-[30px] h-[32px] ml-[40px] mr-[37px] text-white shrink-0" />
        <span className="font-bold mr-[42px]">QGIS</span>
        <div className="flex gap-[42px]">{menus.map((m) => <span key={m}>{m}</span>)}</div>
      </div>

      <div className="h-[1402px] flex flex-col rounded-t-[14px] rounded-b-[14px] bg-[#5f5f5f] border-x-2 border-[#3a3a3a] overflow-hidden">
        <div className="h-[58px] shrink-0 grid grid-cols-[1fr_auto_1fr] items-center bg-[#2b2b2b] border-b-2 border-[#111]">
          <div className="flex gap-[16px] pl-[14px]">
            <span className="w-[24px] h-[24px] rounded-full bg-[#ff4b4b]" />
            <span className="w-[24px] h-[24px] rounded-full bg-[#ffb127]" />
            <span className="w-[24px] h-[24px] rounded-full bg-[#27c132]" />
          </div>
          <span className="text-[25px] font-semibold text-[#8c8c8c]">*Unbenanntes Projekt — QGIS</span>
        </div>

        <div className="h-[393px] shrink-0">
          <Row className="h-[72px]">
            <Sep /><I><Page /></I><I><Folder /></I><I><Floppy /></I><I><Layouts /></I><I><Manager /></I><I><Style /></I><I><QLogo /></I><Gap />
            <Sep /><I><Hand className="w-[52px] h-[52px] fill-white text-black" strokeWidth={1.4} /></I><I><MoveIcon /></I><I><ZoomIn /></I><I><ZoomOut /></I><I><ZoomFull /></I><I><ZoomSel /></I><I><ZoomLayer /></I><I><Zoom11 /></I><I><ZoomLast /></I><I><ZoomNext /></I><span className="w-[6px] shrink-0" /><More />
            <Sep /><I><Identify /></I><More />
            <Sep /><I><Hexa /></I><More />
            <Sep /><I><NullIcon /></I><Gap />
            <Sep /><I><RedX /></I><Gap />
            <Sep /><I><ShareIcon /></I><Gap />
            <Sep /><I><PenDots /></I><More />
            <Sep /><I><Pipe /></I>
          </Row>
          <Row className="h-[78.5px] mt-[4px]">
            <Sep /><I><AddLayer /></I><I><GeoBox /></I><I><VIcon /></I><I><Feather /></I><I><Chip /></I><I><MeshIcon /></I><I><VTile /></I><Gap />
            <Sep /><I><Pencils /></I><Boxed><EditPen /></Boxed><I><SaveEdits /></I>
            <div className="w-[94px] flex justify-center shrink-0">
              <div className="relative w-[88px] h-[65px] rounded-[5px] border-2 border-[#e6e6e6] bg-[#3b3b3b] flex items-center">
                <svg viewBox="0 0 56 56" className="w-[56px] h-[56px]">
                  <rect x="10" y="6" width="7" height="7" fill="#aaa" />
                  <path d="M14 16C10 28 12 36 18 38C26 40 38 40 46 48" fill="none" stroke="#6db37e" strokeWidth="3" strokeDasharray="6 3" />
                  <Pen x="35" y="24" len="20" w="7" a="-28" />
                </svg>
                <div className="absolute right-[0px] top-[0px] bottom-[0px] w-[28px] rounded-[5px] bg-[#353535] border border-[#222] flex items-center justify-center">
                  <svg viewBox="0 0 10 9" className="w-[8px] h-[8px]"><path d="M0 0H10L5 9Z" fill="#aaa" /></svg>
                </div>
              </div>
            </div>
            <I><AddRect /></I><Drop /><Boxed><BlobGear /></Boxed><I><VertexTool /></I><Drop /><I><MultiEdit /></I><I><Trash /></I><I><Scissors /></I><I><Copy /></I><span className="w-[8px] shrink-0" /><More />
            <Sep /><I><CurveIcon /></I><More />
            <Sep /><I><AlignIcon /></I><More />
            <span className="w-[80px] shrink-0" />
            <Sep /><I><RedoDim /></I><More />
            <Sep /><I><Abc /></I><More />
          </Row>
          <Row3 />
          <Row4 />
          <Row>
            <Sep />
            <I><Pipette /></I><I><Hash /></I><I><Cross3 /></I><I><Overlap /></I><I><StarWarn /></I>
          </Row>
        </div>

        <div className="flex-1 flex min-h-0">
          <div className="w-[546px] shrink-0 flex flex-col text-[#111]">
            <div className="h-[26px] flex items-center pr-[10px] justify-between">
              <span className="w-[480px] text-center text-[21px]">Browser</span>
              <CloseBox />
            </div>
            <div className="h-[71px] flex items-center pl-[0px]">
              {[
                <g key="a"><rect x="4" y="3" width="22" height="22" fill="#eeeee8" stroke="#888" /><SmPlus /></g>,
                <g key="b" fill="none" stroke="#3a7fc4" strokeWidth="5"><path d="M7 16A12 12 0 0 1 29 11" /><path d="M29 20A12 12 0 0 1 7 25" /><path d="M24 4L33 13L23 14Z" fill="#3a7fc4" stroke="none" /><path d="M12 32L3 23L13 22Z" fill="#3a7fc4" stroke="none" /></g>,
                <g key="c"><Funnel /></g>,
                <g key="d"><TreeUp /></g>,
                <g key="e"><circle cx="18" cy="18" r="13" fill="#4a85c4" stroke="#2c5a8e" /><text x="18" y="26" textAnchor="middle" fontSize="21" fontStyle="italic" fontWeight="700" fontFamily="Liberation Serif, serif" fill="#fff">i</text></g>,
              ].map((n, i) => (
                <div key={i} className="w-[52px] flex justify-center shrink-0 first:ml-[3px]"><Sm>{n}</Sm></div>
              ))}
            </div>
            <div className="relative h-[126px] ml-[1px] mr-[17px] rounded-[3px] border-2 border-[#2b2b2b] bg-[#9f9f9f] text-[26px] overflow-hidden">
              <div className="h-[36px] flex items-center pt-[4px]">
                <svg viewBox="0 0 10 12" className="ml-[15px] w-[10px] h-[12px]"><path d="M0 0L10 6L0 12Z" fill="#666" /></svg>
                <svg viewBox="0 0 30 28" className="ml-[18px] w-[30px] h-[28px]"><path d="M2 3H18L28 8V26H2Z" fill="#eee" stroke="#888" strokeWidth="1.5" /></svg>
                <span className="ml-[12px]">/Volumes</span>
              </div>
              <div className="h-[36px] flex items-center">
                <svg viewBox="0 0 32 32" className="ml-[41px] w-[34px] h-[34px]"><path d="M16 2L20 12L31 12L22 19L26 30L16 23L6 30L10 19L1 12L12 12Z" fill="#ffe31a" stroke="#b88a00" strokeWidth="1.6" /></svg>
                <span className="ml-[9px]">Favoriten</span>
              </div>
              <div className="h-[36px] flex items-center">
                <svg viewBox="0 0 10 12" className="ml-[15px] w-[10px] h-[12px]"><path d="M0 0L10 6L0 12Z" fill="#666" /></svg>
                <svg viewBox="0 0 30 30" className="ml-[18px] w-[30px] h-[30px]"><path d="M3 2H27V28H8C3 28 3 24 3 22Z" fill="#eee" stroke="#aaa" /><path d="M8 2V22C6 22 4 24 3 26" fill="none" stroke="#bbb" /><path d="M17 0H23V12L20 16L17 12Z" fill="#4a7eb8" stroke="#2c5a8e" /></svg>
                <span className="ml-[12px]">Räumliche Lesezeichen</span>
              </div>
              <div className="absolute left-[4px] top-[105px] w-[503px] h-[16px] rounded-[5px] bg-[#2b2b2b] p-[1px] pr-[17px]">
                <div className="h-full rounded-[4px] bg-[#585858]" />
              </div>
              <div className="absolute right-[1px] top-[1px] w-[16px] h-[105px] rounded-[5px] bg-[#2b2b2b] p-[2px]">
                <div className="h-[28px] rounded-[3px] bg-[#585858]" />
              </div>
            </div>

            <div className="h-[26px] mt-[21px] flex items-center pr-[10px] justify-between">
              <span className="w-[480px] text-center text-[21px]">Layer</span>
              <CloseBox />
            </div>
            <div className="h-[67px] flex items-center pt-[4px] pl-[4px]">
              <div className="w-[52px] flex justify-center shrink-0"><Sm><path d="M3 18L14 8L22 26L12 32Z" fill="#d23a2a" /><path d="M7 12L14 8L20 18L11 22Z" fill="#f2d11a" /><path d="M14 24L24 14L34 4" stroke="#d9881a" strokeWidth="3" /><path d="M14 18L26 24L20 34L10 28Z" fill="#d9a05a" stroke="#8a5a20" /></Sm></div>
              <div className="w-[52px] flex justify-center shrink-0"><Sm><rect x="2" y="14" width="20" height="19" fill="none" stroke="#888" strokeWidth="1.5" /><rect x="7" y="6" width="20" height="20" fill="#e8e8e8" stroke="#777" /><path d="M14 22V4A3 3 0 0 1 20 4V22A2 2 0 0 1 16 22V8" fill="none" stroke="#27476a" strokeWidth="1.6" /><SmPlus /></Sm></div>
              <div className="w-[52px] flex justify-center shrink-0"><Sm><path d="M1 15C8 5 24 5 32 15C24 25 8 25 1 15Z" fill="#e8e8e8" stroke="#ccc" /><circle cx="16" cy="15" r="8" fill="#4a85c4" /><circle cx="16" cy="15" r="3.5" fill="#111" /><path d="M24 23H34L29 32Z" fill="#aaa" /></Sm></div>
              <div className="w-[52px] flex justify-center shrink-0"><Sm><Funnel /><path d="M26 25H35L30.5 33Z" fill="#aaa" /></Sm></div>
              <div className="w-[52px] flex justify-center shrink-0"><Sm><text x="7" y="22" textAnchor="middle" fontSize="26" fontFamily="Liberation Serif, serif" fill="#5b2b6e">ε</text><path d="M16 21H32L27 28V36H21V28Z" fill="#ccc" stroke="#999" /></Sm></div>
              <Drop />
              <div className="w-[52px] flex justify-center shrink-0"><Sm><TreeUp down /></Sm></div>
              <div className="w-[52px] flex justify-center shrink-0"><Sm><TreeUp /></Sm></div>
              <div className="w-[52px] flex justify-center shrink-0"><Sm><rect x="4" y="3" width="22" height="22" fill="#eeeee8" stroke="#888" /><rect x="20" y="24" width="12" height="10" rx="2" fill="#f0244a" /><path d="M23 29H29" stroke="#fff" strokeWidth="2.4" /></Sm></div>
            </div>
            <div className="flex-1 ml-[1px] mr-[14px] mb-[-2px] rounded-[3px] border-2 border-[#2b2b2b] bg-[#a0a0a0] flex flex-col">
              <div className="h-[44px] mt-[1px] bg-[#ececec] flex items-center">
                <span className="ml-[50px] w-[25px] h-[26px] rounded-[5px] border-2 border-[#444] bg-[#a8a8a8] flex items-center justify-center shrink-0">
                  <Check className="w-[20px] h-[20px] text-[#111]" strokeWidth={2.4} />
                </span>
                <svg viewBox="0 0 32 32" className="ml-[15px] w-[32px] h-[32px] shrink-0">
                  <rect width="32" height="32" fill="#7f3f8f" stroke="#111" />
                  <path d="M21 5L27 8L13 26L7 29L8 22Z" fill="#ea5a14" stroke="#222" />
                  <path d="M8 22L13 26L6 30Z" fill="#ccc" />
                </svg>
                <span className="ml-[13px] text-[26px] font-bold underline decoration-2 underline-offset-4 text-[#111]">Neuer Temporärlayer</span>
                <span className="ml-auto mr-[14px] w-[36px] h-[36px] rounded-[4px] bg-[#6a6a6a] flex items-center justify-center">
                  <svg viewBox="0 0 28 24" className="w-[26px] h-[22px]"><rect x="2" y="5" width="24" height="14" rx="2" fill="none" stroke="#222" strokeWidth="1.5" /><path d="M6 2V5M11 2V5M16 2V5M21 2V5M6 19V22M11 19V22M16 19V22M21 19V22" stroke="#222" /></svg>
                </span>
              </div>
            </div>
          </div>
          <div className="flex-1 bg-white min-w-0">
            <svg viewBox="548 500 1336 886" className="w-full h-full block">
              <path d={shape} fill="#823f88" fillRule="evenodd" stroke="#2a2a2a" strokeWidth="1.2" strokeLinejoin="round" />
            </svg>
          </div>
        </div>

        <div className="h-[64px] shrink-0 flex items-center pt-[4px] text-[24px] text-[#111] whitespace-nowrap">
          <div className="ml-[7px] w-[398px] h-[46px] rounded-[4px] border-2 border-[#2b2b2b] bg-[#a0a0a0] flex items-center text-[#666]">
            <Search className="ml-[14px] w-[26px] h-[26px] text-[#888]" strokeWidth={1.8} />
            <span className="ml-[11px]">Suchmuster (⌘K)</span>
          </div>
          <span className="ml-[70px] w-[4px] h-[14px] bg-[#222] rounded-full" />
          <div className="ml-[8px] w-[193px] h-[44px] rounded-[5px] border-2 border-[#2b2b2b] bg-[#a0a0a0] flex items-center justify-center">-1,449&nbsp;&nbsp;1,000</div>
          <svg viewBox="0 0 30 40" className="ml-[7px] w-[30px] h-[36px]">
            <path d="M6 6C12 0 20 6 24 20C28 34 16 40 11 32C8 26 4 14 6 6Z" fill="#fff" stroke="#111" strokeWidth="2" />
            <circle cx="12" cy="14" r="4" fill="#111" /><circle cx="18" cy="29" r="4" fill="none" stroke="#111" strokeWidth="2" />
          </svg>
          <span className="ml-[20px] w-[4px] h-[12px] bg-[#444] rounded-full" />
          <Spin w="w-[172px] ml-[8px]" text="1:13" />
          <svg viewBox="0 0 26 40" className="ml-[24px] w-[26px] h-[34px]">
            <path d="M6 20V9A7 7 0 0 1 20 9V20" fill="none" stroke="#ccc" strokeWidth="2.4" />
            <rect x="1" y="18" width="24" height="21" rx="3" fill="#494949" />
          </svg>
          <span className="ml-[22px] w-[2px] h-[16px] bg-[#333]" />
          <Spin w="w-[182px] ml-[10px]" text="100%" />
          <span className="ml-[22px] w-[3px] h-[14px] bg-[#333]" />
          <Spin w="w-[184px] ml-[20px]" text="0,0 °" className="pl-[14px]" />
          <span className="ml-[14px] w-[25px] h-[26px] rounded-[5px] border-2 border-[#444] bg-[#a8a8a8] flex items-center justify-center shrink-0">
            <Check className="w-[20px] h-[20px]" strokeWidth={2.4} />
          </span>
          <span className="ml-[15px]">Zeichnen</span>
          <svg viewBox="0 0 28 28" className="ml-[28px] w-[26px] h-[26px]">
            <circle cx="14" cy="14" r="12" fill="#ddd" /><path d="M2 14H26M14 2V26M5 7H23M5 21H23" stroke="#555" strokeWidth="1.6" />
          </svg>
          <span className="ml-[8px]">EPSG:25832</span>
          <svg viewBox="0 0 32 36" className="ml-[44px] w-[32px] h-[36px]">
            <path d="M16 1A15 15 0 1 1 16 31L25 35L22 29A15 15 0 0 1 16 1Z" fill="#4a4a4a" />
            <circle cx="9" cy="16" r="2.4" fill="#eee" /><circle cx="16" cy="16" r="2.4" fill="#eee" /><circle cx="23" cy="16" r="2.4" fill="#eee" />
          </svg>
        </div>
      </div>

      {/* popup of the digitizing button */}
      <div className="absolute left-[709px] top-[255px] w-[425px] h-[256px] bg-[#5f5f5f] border-2 border-[#222] shadow-[0_6px_14px_rgba(0,0,0,0.25)] text-[26px] text-[#161616]">
        <div className="h-[43px] mt-[9px] flex items-center pl-[58px] relative">
          <svg viewBox="0 0 30 30" className="absolute left-[14px] top-[5px] w-[30px] h-[30px]"><path d="M8 24L24 6" stroke="#6db37e" strokeWidth="2" strokeDasharray="5 3" /><rect x="5" y="22" width="5" height="5" fill="#aaa" /></svg>
          Mit Segment digitalisieren
        </div>
        <div className="h-[43px] flex items-center pl-[58px] relative">
          <svg viewBox="0 0 30 30" className="absolute left-[14px] top-[5px] w-[30px] h-[30px]"><path d="M6 28C4 14 12 4 26 4" fill="none" stroke="#6db37e" strokeWidth="2" strokeDasharray="5 3" /></svg>
          Mit Kurven digitalisieren
        </div>
        <div className="h-[44px] mx-[5px] bg-[#ececec] flex items-center pl-[53px] relative text-[#111]">
          <svg viewBox="0 0 36 36" className="absolute left-[6px] top-[4px] w-[36px] h-[36px]">
            <rect x="4" y="3" width="6" height="6" fill="#aaa" />
            <path d="M6 12C4 22 8 30 30 32" fill="none" stroke="#6db37e" strokeWidth="2" strokeDasharray="4 2" />
            <Pen x="21" y="15" len="14" w="6" a="-28" />
          </svg>
          <span className="underline underline-offset-4 decoration-2">Laufende Digitalisierung</span>
        </div>
        <div className="h-[44px] flex items-center pl-[58px] relative">
          <svg viewBox="0 0 30 30" className="absolute left-[14px] top-[5px] w-[30px] h-[30px]"><path d="M6 10L20 5L26 18L20 27L8 24Z" fill="none" stroke="#6db37e" strokeWidth="3" /></svg>
          Form digitalisieren
        </div>
        <div className="h-[2px] mx-[26px] my-[3px] bg-[#333]" />
        <div className="flex items-center justify-between pl-[20px] pr-[12px] mt-[4px]">
          <span className="text-[#1c1c1c]">Laufende Toleranz</span>
          <Spin w="w-[142px]" text="2px" />
        </div>
      </div>

      {/* red marker rings drawn on the screenshot */}
      <svg viewBox="0 0 1886 1450" className="absolute inset-0 w-[1886px] h-[1450px] pointer-events-none [filter:drop-shadow(3px_4px_3px_#000)]">
        <ellipse cx="749" cy="226" rx="63" ry="49" fill="none" stroke="#f00" strokeWidth="11" />
        <ellipse cx="913" cy="372" rx="247" ry="44" fill="none" stroke="#f00" strokeWidth="11" />
      </svg>
    </div>
  );
}
